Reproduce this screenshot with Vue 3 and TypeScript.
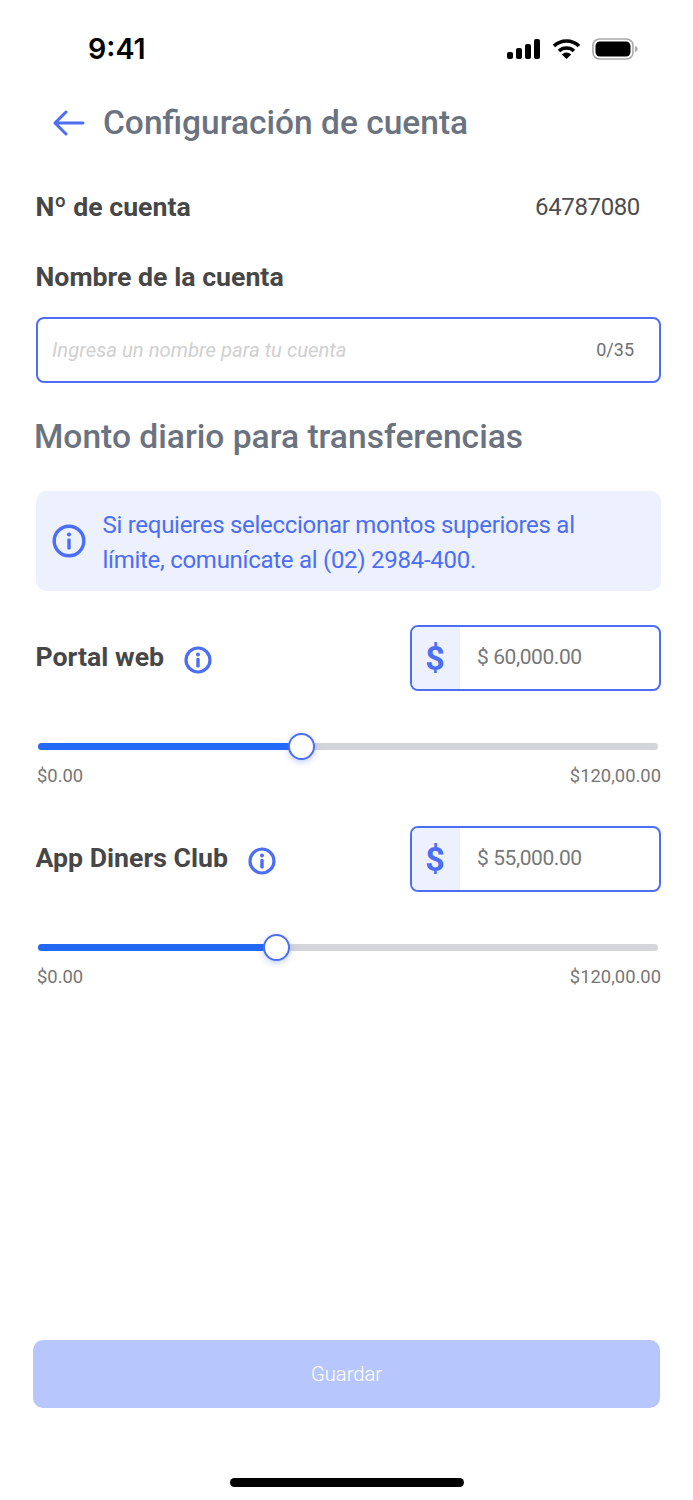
<script setup lang="ts">
interface Limit {
  key: string;
  label: string;
  value: string;
  percent: number;
}

const limits: Limit[] = [
  { key: 'web', label: 'Portal web', value: '$ 60,000.00', percent: 42.55 },
  { key: 'app', label: 'App Diners Club', value: '$ 55,000.00', percent: 38.5 },
];
</script>

<template>
  <div class="screen">
    <div class="status-bar">
      <span class="time">9:41</span>
      <div class="status-icons">
        <svg width="34" height="20" viewBox="0 0 34 20">
          <rect x="0" y="13" width="6" height="7" rx="2" fill="#000" />
          <rect x="9" y="9" width="6" height="11" rx="2" fill="#000" />
          <rect x="18" y="5" width="6" height="15" rx="2" fill="#000" />
          <rect x="27" y="0" width="6" height="20" rx="2" fill="#000" />
        </svg>
        <svg width="29" height="20" viewBox="0 0 29 20">
          <path d="M2 7 A18 18 0 0 1 27 7" fill="none" stroke="#000" stroke-width="3.6" />
          <path d="M7 12 A11 11 0 0 1 22 12" fill="none" stroke="#000" stroke-width="3.6" />
          <path d="M9.8 15.4 A7 7 0 0 1 19.2 15.4 L14.5 20 Z" fill="#000" />
        </svg>
        <svg width="46" height="22" viewBox="0 0 46 22">
          <rect x="1" y="1" width="40" height="20" rx="6.5" fill="none" stroke="#a9a9a9" stroke-width="1.6" />
          <rect x="3.5" y="3.5" width="35" height="15" rx="4.5" fill="#000" />
          <path d="M43 8 C45 8.6 45.6 9.6 45.6 11 C45.6 12.4 45 13.4 43 14 Z" fill="#a9a9a9" />
        </svg>
      </div>
    </div>

    <header class="header">
      <svg class="back" width="32" height="26" viewBox="0 0 32 26">
        <path d="M30 13 H2 M13 2 L2 13 L13 24" fill="none" stroke="#4c6ef5" stroke-width="3" stroke-linecap="round" stroke-linejoin="round" />
      </svg>
      <h1 class="title">Configuración de cuenta</h1>
    </header>

    <main class="content">
      <div class="account-row">
        <span class="label">Nº de cuenta</span>
        <span class="account-number">64787080</span>
      </div>

      <div class="label name-label">Nombre de la cuenta</div>
      <div class="name-input">
        <span class="placeholder">Ingresa un nombre para tu cuenta</span>
        <span class="counter">0/35</span>
      </div>

      <h2 class="section-title">Monto diario para transferencias</h2>

      <div class="notice">
        <svg class="notice-icon" width="34" height="34" viewBox="0 0 34 34">
          <circle cx="17" cy="17" r="14.8" fill="none" stroke="#4c6ef5" stroke-width="3.4" />
          <circle cx="17" cy="10.5" r="2.1" fill="#4c6ef5" />
          <rect x="15.3" y="14.5" width="3.4" height="11" rx="1.2" fill="#4c6ef5" />
        </svg>
        <p class="notice-text">Si requieres seleccionar montos superiores al límite, comunícate al (02) 2984-400.</p>
      </div>

      <section v-for="limit in limits" :key="limit.key" class="limit">
        <div class="limit-head">
          <div class="limit-name">
            <span class="label">{{ limit.label }}</span>
            <svg class="limit-info" width="28" height="28" viewBox="0 0 28 28">
              <circle cx="14" cy="14" r="12" fill="none" stroke="#4c6ef5" stroke-width="3.2" />
              <circle cx="14" cy="8.6" r="2" fill="#4c6ef5" />
              <rect x="12.3" y="12" width="3.4" height="9.5" rx="1" fill="#4c6ef5" />
            </svg>
          </div>
          <div class="amount">
            <span class="amount-sign">$</span>
            <span class="amount-value">{{ limit.value }}</span>
          </div>
        </div>
        <div class="track">
          <div class="track-fill" :style="{ width: limit.percent + '%' }">
            <span class="thumb"></span>
          </div>
        </div>
        <div class="range">
          <span>$0.00</span>
          <span>$120,00.00</span>
        </div>
      </section>
    </main>

    <button class="save" type="button">Guardar</button>
    <div class="home-bar"></div>
  </div>
</template>

<style>
html, body { background: #fff; }
</style>

<style scoped>
.screen {
  width: 693px;
  height: 1500px;
  background: #fff;
  display: flex;
  flex-direction: column;
  font-family: Roboto, "Noto Sans", sans-serif;
  overflow: hidden;
}

.status-bar {
  height: 97px;
  flex-shrink: 0;
  display: flex;
  align-items: center;
  justify-content: space-between;
  padding: 0 55px 0 88px;
}

.time {
  font-family: Inter, sans-serif;
  font-size: 28.6px;
  font-weight: 600;
  color: #000;
}

.status-icons {
  display: flex;
  align-items: center;
  gap: 11px;
}

.header {
  height: 51px;
  display: flex;
  align-items: center;
  gap: 18px;
  padding-left: 53px;
}

.title {
  margin: 0;
  font-size: 33.5px;
  font-weight: 500;
  color: #6b7280;
}

.content {
  flex: 1;
  padding: 0 32px 0 35.5px;
}

.account-row {
  display: flex;
  align-items: center;
  justify-content: space-between;
  padding: 38px 21px 0 0;
  height: 42px;
  box-sizing: content-box;
}

.label {
  font-size: 26.7px;
  font-weight: 700;
  color: #474747;
}

.account-number {
  font-size: 24px;
  letter-spacing: -0.37px;
  color: #4d4d4d;
}

.name-label {
  margin-top: 34px;
  line-height: 30px;
}

.name-input {
  height: 66px;
  box-sizing: border-box;
  margin-top: 25px;
  border: 2px solid #4c6ef5;
  border-radius: 8px;
  display: flex;
  align-items: center;
  justify-content: space-between;
  padding: 0 25px 0 14.5px;
}

.placeholder {
  font-size: 20.3px;
  font-style: italic;
  color: #d0d0d0;
}

.counter {
  font-size: 18px;
  color: #707070;
  margin-top: -2px;
}

.section-title {
  margin: 32px 0 0 -1.5px;
  font-size: 33.6px;
  line-height: 44px;
  font-weight: 500;
  color: #6b7280;
}

.notice {
  margin-top: 32px;
  height: 100px;
  border-radius: 10px;
  background: #edf0fd;
  display: flex;
  align-items: center;
  gap: 16.5px;
  padding: 0 60px 0 16.5px;
  box-sizing: border-box;
}

.notice-icon {
  flex-shrink: 0;
}

.notice-text {
  margin: 4px 0 0;
  font-size: 24px;
  letter-spacing: -0.28px;
  line-height: 35px;
  color: #4c6ef5;
}

.limit {
  margin-top: 34px;
  height: 167px;
}

.limit-head {
  display: flex;
  align-items: center;
  justify-content: space-between;
}

.limit-name {
  display: flex;
  align-items: center;
  gap: 20px;
}

.limit-name .label {
  margin-top: -3px;
}

.limit-info {
  margin-top: 3px;
}

.amount {
  width: 251px;
  height: 66px;
  box-sizing: border-box;
  border: 2px solid #4c6ef5;
  border-radius: 8px;
  display: flex;
  overflow: hidden;
}

.amount-sign {
  width: 48px;
  background: #edf0fd;
  color: #4c6ef5;
  font-size: 34px;
  font-weight: 700;
  display: flex;
  align-items: center;
  justify-content: center;
  padding-right: 2px;
  box-sizing: border-box;
}

.amount-value {
  font-size: 21px;
  letter-spacing: -0.42px;
  color: #777;
  display: flex;
  align-items: center;
  padding: 0 0 2px 17px;
}

.track {
  height: 7px;
  margin: 52px 3px 0 2.5px;
  border-radius: 4px;
  background: #d4d5da;
}

.track-fill {
  position: relative;
  height: 100%;
  border-radius: 4px;
  background: #2468f6;
}

.thumb {
  position: absolute;
  right: -13px;
  top: -10px;
  width: 27px;
  height: 27px;
  box-sizing: border-box;
  border: 2px solid #4c6ef5;
  border-radius: 50%;
  background: #fff;
  box-shadow: 0 2px 6px rgba(76, 110, 245, 0.35);
}

.range {
  display: flex;
  justify-content: space-between;
  margin: 14px 0 0 1.5px;
  font-size: 18.4px;
  line-height: 24px;
  color: #777;
}

.save {
  display: block;
  width: 627px;
  height: 68px;
  margin: 0 0 0 33px;
  flex-shrink: 0;
  border: none;
  border-radius: 10px;
  background: #b7c7fe;
  color: #fff;
  font-family: Roboto, sans-serif;
  font-size: 20.2px;
  font-weight: 300;
}

.home-bar {
  width: 234px;
  height: 9px;
  margin: 70px 0 13px 230px;
  flex-shrink: 0;
  border-radius: 5px;
  background: #000;
}
</style>
